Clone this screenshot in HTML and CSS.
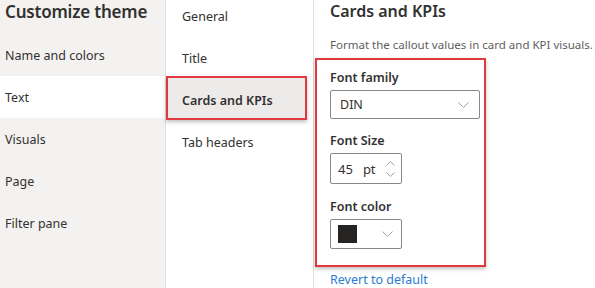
FILE: index.html
```html
<!DOCTYPE html>
<html lang="en">
<head>
  <meta charset="UTF-8" />
  <meta name="viewport" content="width=device-width, initial-scale=1.0" />
  <title>Customize theme</title>
  <link rel="stylesheet" href="styles.css">
</head>
<body>
  <div class="sidebar">
    <h1>Customize theme</h1>
    <div class="nav-item">Name and colors</div>
    <div class="nav-item active">Text</div>
    <div class="nav-item">Visuals</div>
    <div class="nav-item">Page</div>
    <div class="nav-item">Filter pane</div>
  </div>

  <div class="subnav">
    <div class="sub-item">General</div>
    <div class="sub-item">Title</div>
    <div class="sub-item selected">Cards and KPIs</div>
    <div class="sub-item">Tab headers</div>
  </div>

  <div class="content">
    <h2>Cards and KPIs</h2>
    <p class="desc">Format the callout values in card and KPI visuals.</p>

    <div class="group">
      <label>Font family</label>
      <div class="dropdown">
        <span>DIN</span>
        <svg class="chev" width="11" height="6" viewBox="0 0 11 6"><path d="M0.5 0.5 L5.5 5.5 L10.5 0.5" fill="none" stroke="#a19f9d" stroke-width="1"/></svg>
      </div>

      <label>Font Size</label>
      <div class="spin">
        <span class="num">45</span>
        <span class="unit">pt</span>
        <div class="arrows">
          <svg width="9" height="5" viewBox="0 0 9 5"><path d="M0.5 4.5 L4.5 0.5 L8.5 4.5" fill="none" stroke="#a19f9d" stroke-width="1"/></svg>
          <svg width="9" height="5" viewBox="0 0 9 5"><path d="M0.5 0.5 L4.5 4.5 L8.5 0.5" fill="none" stroke="#a19f9d" stroke-width="1"/></svg>
        </div>
      </div>

      <label>Font color</label>
      <div class="color-pick">
        <span class="swatch"></span>
        <svg class="chev" width="11" height="6" viewBox="0 0 11 6"><path d="M0.5 0.5 L5.5 5.5 L10.5 0.5" fill="none" stroke="#a19f9d" stroke-width="1"/></svg>
      </div>
    </div>

    <a href="#" class="revert">Revert to default</a>
  </div>
</body>
</html>
```

FILE: styles.css
```css
body {
  font-family: 'Segoe UI', 'Noto Sans', sans-serif;
  color: #323130;
  margin: 0;
  padding: 0;
  display: flex;
  height: 288px;
  overflow: hidden;
  background: white;
}
.sidebar {
  width: 165px;
  background: #f3f2f1;
  flex-shrink: 0;
}
.sidebar h1 {
  font-size: 17px;
  font-weight: 600;
  margin: 0;
  padding: 0 0 0 5px;
  height: 34px;
  line-height: 24px;
  letter-spacing: -0.2px;
}
.nav-item {
  height: 42px;
  line-height: 43px;
  padding-left: 5px;
  font-size: 12.5px;
}
.nav-item.active {
  background: white;
}
.subnav {
  width: 147px;
  flex-shrink: 0;
  border-left: 1px solid #e1dfdd;
  border-right: 1px solid #e1dfdd;
  margin-top: -7px;
}
.sub-item {
  height: 42px;
  box-sizing: border-box;
  padding: 6px 0 0 16px;
  line-height: 36px;
  font-size: 12.5px;
}
.sub-item.selected {
  background: #edebe9;
  font-weight: 600;
  border: 2px solid #e0393e;
  box-shadow: 0 2px 4px rgba(0, 0, 0, 0.25);
  padding-left: 14px;
  margin-right: 6px;
  height: 44px;
  margin-top: -1px;
  margin-bottom: -1px;
  line-height: 34px;
}
.content {
  flex: 1;
  padding-left: 16px;
}
h2 {
  font-size: 16px;
  font-weight: 600;
  margin: 0;
  line-height: 22px;
  height: 34px;
}
.desc {
  font-size: 11.5px;
  color: #605e5c;
  margin: 0;
  line-height: 22px;
  height: 24px;
}
.group {
  margin-left: -15px;
  width: 154px;
  border: 2px solid #e0393e;
  box-shadow: 0 2px 4px rgba(0, 0, 0, 0.25);
  padding: 6px 0 16px 13px;
  display: flex;
  flex-direction: column;
  align-items: flex-start;
}
label {
  font-size: 12.5px;
  font-weight: 600;
  line-height: 24px;
}
.dropdown {
  height: 27px;
  border: 1px solid #8a8886;
  border-radius: 2px;
  display: flex;
  align-items: center;
  justify-content: space-between;
  padding: 0 10px 0 9px;
  width: 129px;
  font-size: 12.5px;
  margin-bottom: 10px;
}
.spin {
  width: 70px;
  height: 29px;
  border: 1px solid #8a8886;
  border-radius: 2px;
  display: flex;
  align-items: center;
  font-size: 13px;
  margin-bottom: 11px;
}
.num {
  margin-left: 7px;
}
.unit {
  margin-left: 10px;
}
.arrows {
  margin-left: auto;
  margin-right: 6px;
  display: flex;
  flex-direction: column;
  gap: 6px;
}
.arrows svg {
  display: block;
}
.color-pick {
  height: 30px;
  border: 1px solid #8a8886;
  border-radius: 2px;
  display: flex;
  align-items: center;
  justify-content: space-between;
  padding: 0 8px 0 7px;
  box-sizing: border-box;
  width: 72px;
}
.swatch {
  width: 19px;
  height: 18px;
  background: #252423;
}
.revert {
  display: block;
  margin-top: 5px;
  color: #2b7cd3;
  text-decoration: none;
  font-size: 12.5px;
  line-height: 16px;
}
```
